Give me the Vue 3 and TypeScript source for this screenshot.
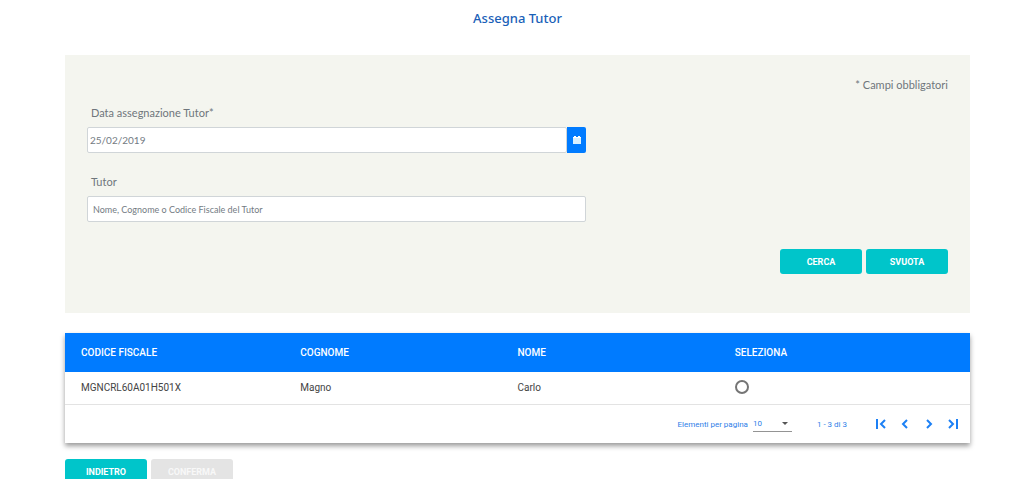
<script setup lang="ts">
import { ref } from 'vue'

interface Person {
  code: string
  surname: string
  name: string
}

const today = '25/02/2019'
const date = ref(today)
const query = ref('')
const selected = ref('')
const pageSize = ref(10)
const people: Person[] = [{ code: 'MGNCRL60A01H501X', surname: 'Magno', name: 'Carlo' }]

function clearForm(): void {
  date.value = today
  query.value = ''
}
</script>

<template>
  <main class="page">
    <h1 class="title">Assegna Tutor</h1>

    <form class="panel" @submit.prevent>
      <p class="required">* Campi obbligatori</p>
      <div class="field">
        <label for="date">Data assegnazione Tutor*</label>
        <div class="date-group">
          <input id="date" v-model="date" class="date" type="text" />
          <button class="calendar" type="button" aria-label="Apri calendario">
            <svg viewBox="0 0 8 8" width="8" height="8" aria-hidden="true">
              <path d="M0 1h1V0h2v1h2V0h2v1h1v1H0z" fill="#fff" />
              <path d="M0 2h8v6H0z" fill="#d9f0ff" />
            </svg>
          </button>
        </div>
      </div>
      <div class="field">
        <label for="tutor">Tutor</label>
        <input id="tutor" v-model="query" class="tutor" type="text" placeholder="Nome, Cognome o Codice Fiscale del Tutor" />
      </div>
      <div class="form-actions">
        <button class="btn" type="submit">CERCA</button>
        <button class="btn" type="button" @click="clearForm">SVUOTA</button>
      </div>
    </form>

    <section class="results">
      <table>
        <thead>
          <tr>
            <th class="first" scope="col">CODICE FISCALE</th>
            <th scope="col">COGNOME</th>
            <th scope="col">NOME</th>
            <th class="last" scope="col">SELEZIONA</th>
          </tr>
        </thead>
        <tbody>
          <tr v-for="p in people" :key="p.code">
            <td class="first">{{ p.code }}</td>
            <td>{{ p.surname }}</td>
            <td>{{ p.name }}</td>
            <td class="last">
              <input v-model="selected" class="radio" type="radio" name="tutor" :value="p.code" :aria-label="`Seleziona ${p.name} ${p.surname}`" />
            </td>
          </tr>
        </tbody>
      </table>
      <div class="paginator">
        <label for="size">Elementi per pagina</label>
        <div class="select-wrap">
          <select id="size" v-model="pageSize">
            <option :value="10">10</option>
            <option :value="20">20</option>
          </select>
          <svg class="arrow" viewBox="0 0 6 3" width="6" height="3" aria-hidden="true"><path d="M0 0h6L3 3z" fill="#555" /></svg>
        </div>
        <span class="range">1 - 3 di 3</span>
        <nav class="pages" aria-label="Pagine">
          <button type="button" aria-label="Prima pagina">
            <svg viewBox="0 0 12 10" width="12" height="10"><path d="M2 0v10M10 1L6 5l4 4" /></svg>
          </button>
          <button type="button" aria-label="Pagina precedente">
            <svg viewBox="0 0 12 10" width="12" height="10"><path d="M8 1L4 5l4 4" /></svg>
          </button>
          <button type="button" aria-label="Pagina successiva">
            <svg viewBox="0 0 12 10" width="12" height="10"><path d="M4 1l4 4-4 4" /></svg>
          </button>
          <button type="button" aria-label="Ultima pagina">
            <svg viewBox="0 0 12 10" width="12" height="10"><path d="M2 1l4 4-4 4M10 0v10" /></svg>
          </button>
        </nav>
      </div>
    </section>

    <div class="bottom">
      <button class="btn" type="button">INDIETRO</button>
      <button class="btn" type="button" disabled>CONFERMA</button>
    </div>
  </main>
</template>

<style>
body {
  margin: 0;
  background: #fff;
}
</style>

<style scoped>
* {
  box-sizing: border-box;
}
.page {
  padding: 8px 54px 0 65px;
  font-family: Roboto, sans-serif;
}
button,
input,
select {
  font-family: inherit;
  margin: 0;
}
.title {
  margin: 0 0 27px;
  font: 500 13px/20px "Noto Sans", "Open Sans", sans-serif;
  text-align: center;
  color: #1a5fb8;
}
.panel {
  padding: 22px 22px 39px;
  background: #f4f5ef;
  color: #6f767c;
  font-family: Lato, sans-serif;
}
.required {
  margin: 0 0 12px;
  font-size: 11px;
  line-height: 16px;
  text-align: right;
}
.field {
  width: 58%;
  margin-bottom: 21px;
}
.field label {
  display: block;
  padding: 0 4px;
  margin-bottom: 6px;
  font-size: 11px;
  line-height: 16px;
}
.date-group {
  display: flex;
}
.date,
.tutor {
  width: 100%;
  height: 26px;
  border: 1px solid #d0d5d8;
  border-radius: 2px;
  background: #fff;
  color: #737b83;
  padding: 0 2px;
  font-size: 10px;
}
.date {
  flex: 1;
  min-width: 0;
}
.tutor {
  display: block;
  padding: 0 5px;
  font-size: 9px;
}
.tutor::placeholder {
  color: #737b83;
}
.calendar {
  display: flex;
  align-items: center;
  justify-content: center;
  width: 19px;
  padding: 0;
  border: 0;
  border-radius: 0 2px 2px 0;
  background: #007bff;
}
.form-actions,
.bottom {
  display: flex;
  gap: 4px;
}
.form-actions {
  justify-content: flex-end;
  margin-top: 27px;
}
.btn {
  width: 82px;
  height: 25px;
  flex: none;
  padding: 0;
  border: 0;
  border-radius: 3px;
  background: #00c5ca;
  color: #fff;
  font-family: Roboto, sans-serif;
  font-size: 9px;
  font-weight: 700;
}
.btn:disabled {
  background: #e4e4e4;
  color: #f8f8f8;
}
.results {
  margin-top: 20px;
  background: #fff;
  box-shadow: 0 3px 5px rgba(0, 0, 0, 0.4);
}
table {
  width: 100%;
  table-layout: fixed;
  border-collapse: separate;
  border-spacing: 0;
}
th,
td {
  padding: 0;
  text-align: left;
  font-size: 10px;
}
th {
  height: 39px;
  background: #007bff;
  color: #fff;
  font-weight: 500;
}
td {
  height: 33px;
  padding-bottom: 2px;
  border-bottom: 1px solid #e3e3e3;
  color: #444;
}
.first {
  width: 26%;
  padding-left: 16px;
}
.last {
  width: 26%;
}
.radio {
  display: block;
  appearance: none;
  width: 14px;
  height: 14px;
  border: 2px solid #757575;
  border-radius: 50%;
}
.radio:checked {
  background: #007bff;
  box-shadow: inset 0 0 0 2px #fff;
}
.paginator {
  display: flex;
  align-items: center;
  justify-content: flex-end;
  height: 38px;
  padding-right: 11px;
  font-size: 8px;
  color: #2f80e8;
}
.select-wrap {
  position: relative;
  width: 39px;
  margin: 0 25px 0 5px;
}
select {
  display: block;
  appearance: none;
  width: 100%;
  height: 16px;
  padding: 0;
  border: 0;
  border-bottom: 1px solid #949494;
  border-radius: 0;
  background: transparent;
  color: inherit;
  font-size: 8px;
}
.arrow {
  position: absolute;
  right: 4px;
  top: 6px;
  pointer-events: none;
}
.range {
  margin-right: 28px;
}
.pages {
  display: flex;
  gap: 12px;
}
.pages button {
  display: flex;
  padding: 0;
  border: 0;
  background: none;
}
.pages path {
  fill: none;
  stroke: #1c80f5;
  stroke-width: 2;
}
.bottom {
  margin-top: 16px;
  height: 20px;
  overflow: hidden;
}
</style>
